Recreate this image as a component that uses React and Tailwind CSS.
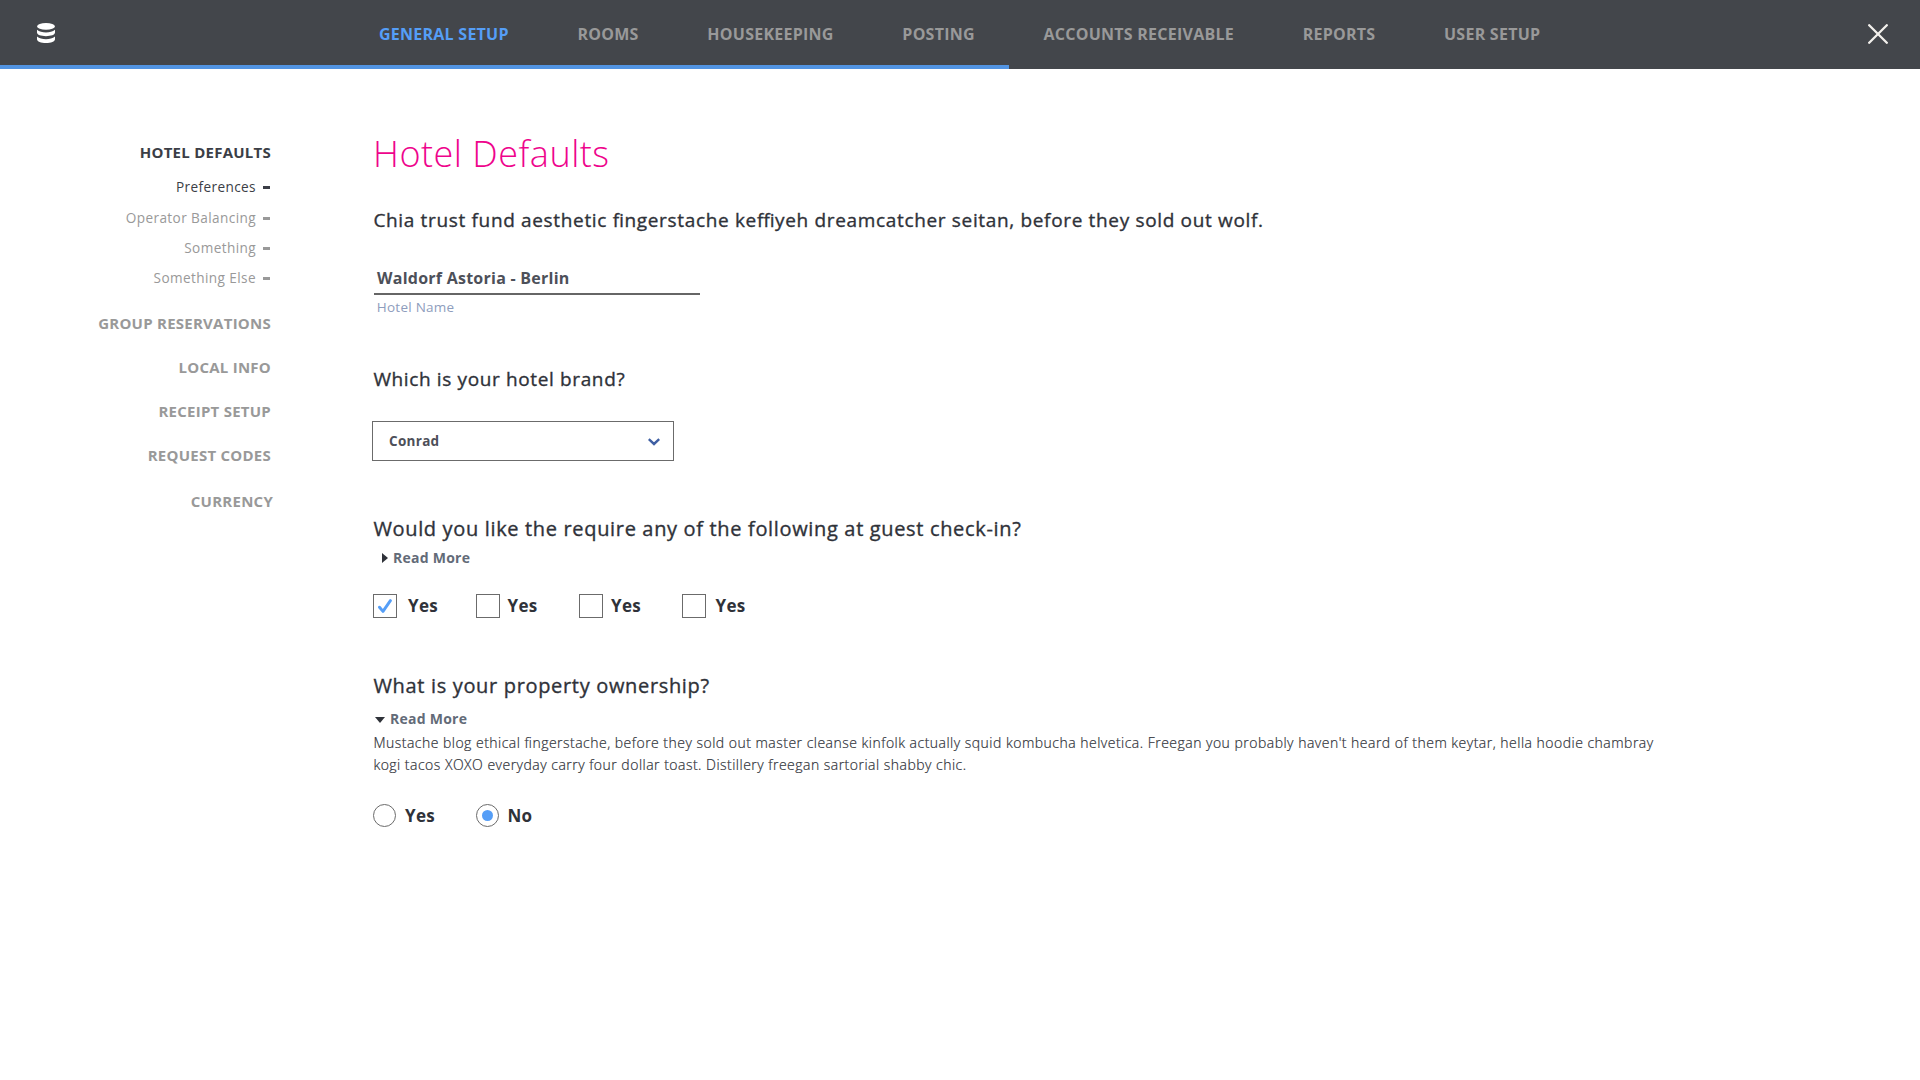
import React from "react";

const NAV = ["GENERAL SETUP", "ROOMS", "HOUSEKEEPING", "POSTING", "ACCOUNTS RECEIVABLE", "REPORTS", "USER SETUP"];

function DatabaseIcon() {
  return (
    <svg width="18" height="20" viewBox="0 0 18 20" fill="#ffffff" className="shrink-0">
      <ellipse cx="9" cy="3.4" rx="8.9" ry="3.4" />
      <path d="M0 6.8 C2.2 8.8 5.4 9.5 9 9.5 S15.8 8.8 18 6.8 V9.6 C18 11.9 14 13.2 9 13.2 S0 11.9 0 9.6 Z" />
      <path d="M0 13.5 C2.2 15.5 5.4 16.2 9 16.2 S15.8 15.5 18 13.5 V16.3 C18 18.7 14 20 9 20 S0 18.7 0 16.3 Z" />
    </svg>
  );
}

function CloseIcon() {
  return (
    <svg width="20" height="20" viewBox="0 0 20 20" fill="none" stroke="#f2f0ec" strokeWidth="2.3" strokeLinecap="round">
      <path d="M1.2 1.2 18.8 18.8M18.8 1.2 1.2 18.8" />
    </svg>
  );
}

function Header() {
  return (
    <header className="h-[69px] bg-[#43464b]">
      <div className="flex h-[65px] items-start">
        <div className="w-[379px] pt-[23px] pl-[37px]">
          <DatabaseIcon />
        </div>
        <nav className="flex gap-[68.7px] pt-[22px] text-base leading-6 font-bold tracking-[0.25px] whitespace-nowrap text-[#999999]">
          {NAV.map((n, i) => (
            <a key={n} className={i === 0 ? "text-[#559ef7]" : ""}>{n}</a>
          ))}
        </nav>
        <button className="mt-6 mr-8 ml-auto">
          <CloseIcon />
        </button>
      </div>
      <div className="h-1 w-[1009px] bg-[#5294e2]" />
    </header>
  );
}

function SubItem({ children, active }) {
  return (
    <li className={`flex h-5 items-center justify-end gap-[7px] text-[13.6px] leading-5 tracking-[0.4px] ${active ? "text-[#3b3e46]" : "text-[#999999]"}`}>
      {children}
      <span className={`h-[3px] w-[7px] ${active ? "bg-[#3b3e46]" : "bg-[#999999]"}`} />
    </li>
  );
}

function Sidebar() {
  return (
    <aside className="w-[273px] pt-[73px] text-right text-[15px] leading-5 font-bold tracking-[0.25px] text-[#999999]">
      <div className="pr-[2px] text-[#3b3e46]">HOTEL DEFAULTS</div>
      <ul className="mt-[15px] mr-[3px] font-normal">
        <SubItem active>Preferences</SubItem>
        <li className="h-[11px]" />
        <SubItem>Operator Balancing</SubItem>
        <li className="h-2.5" />
        <SubItem>Something</SubItem>
        <li className="h-2.5" />
        <SubItem>Something Else</SubItem>
      </ul>
      <div className="mt-[25px] flex flex-col gap-6 pr-[2px]">
        <div>GROUP RESERVATIONS</div>
        <div>LOCAL INFO</div>
        <div>RECEIPT SETUP</div>
        <div>REQUEST CODES</div>
      </div>
      <div className="mt-[26px]">CURRENCY</div>
    </aside>
  );
}

function Check({ checked, label, className }) {
  return (
    <label className={`flex h-6 items-center ${className}`}>
      <span className="flex size-6 items-center justify-center border border-[#6b6b6b]">
        {checked && (
          <svg width="14" height="14" viewBox="0 0 14 14" fill="none" stroke="#559ef7" strokeWidth="2.9" strokeLinecap="round" strokeLinejoin="round">
            <path d="M1.5 8.2 5 12.4 12.4 1.6" />
          </svg>
        )}
      </span>
      {label}
    </label>
  );
}

export default function App() {
  return (
    <div className="min-h-[1080px] w-[1920px] bg-white font-['Open_Sans','Noto_Sans',sans-serif] text-[#2f3239] antialiased">
      <Header />
      <div className="flex">
        <Sidebar />
        <main className="ml-[100px] w-[1300px] pt-[61px]">
          <h1 className="text-[36px] leading-[48px] font-light tracking-[0.5px] text-[#ee048c]">Hotel Defaults</h1>
          <p className="mt-[28px] pl-[0.4px] text-[19px] leading-7 tracking-[0.66px] [-webkit-text-stroke:0.35px] [font-feature-settings:'liga']">
            Chia trust fund aesthetic fingerstache keffiyeh dreamcatcher seitan, before they sold out wolf.
          </p>
          <div className="mt-8 ml-px w-[326px] border-b-2 border-[#666666] pb-[3px] pl-[3px] text-base leading-6 font-bold tracking-[0.25px] text-[#4d5059]">
            Waldorf Astoria - Berlin
          </div>
          <div className="mt-[3px] pl-[3.8px] text-[13.5px] leading-[18px] tracking-[0.25px] text-[#8e9dbd]">Hotel Name</div>

          <h2 className="mt-[49px] pl-[0.4px] text-[19px] leading-7 tracking-[0.63px] [-webkit-text-stroke:0.35px]">Which is your hotel brand?</h2>
          <div className="mt-7 -ml-px flex h-10 w-[302px] items-center justify-between border border-[#6b6b6b] pr-[13px] pl-4 text-[13.5px] leading-5 font-bold tracking-[0.3px] text-[#4d5059]">
            Conrad
            <svg width="12" height="8" viewBox="0 0 12 8" fill="none" stroke="#3f5fa3" strokeWidth="2.4" className="mt-[2px]">
              <path d="M0.8 1.2 6 6 11.2 1.2" />
            </svg>
          </div>

          <h2 className="mt-[54px] pl-[0.4px] text-xl leading-7 tracking-[0.66px] [-webkit-text-stroke:0.35px]">
            Would you like the require any of the following at guest check-in?
          </h2>
          <div className="mt-[5px] flex h-5 items-center pl-[9px] text-sm leading-5 font-bold tracking-[0.25px] text-[#636b78]">
            <svg width="6" height="10" viewBox="0 0 6 10" fill="#2f3239" className="mr-[5px]">
              <path d="M0 0 6 5 0 10Z" />
            </svg>
            Read More
          </div>
          <div className="mt-[26px] flex text-[17px] leading-6 font-bold tracking-[0.3px]">
            <Check checked label="Yes" className="w-[102.5px] gap-[11px]" />
            <Check label="Yes" className="w-[103.5px] gap-2" />
            <Check label="Yes" className="w-[103px] gap-2" />
            <Check label="Yes" className="gap-[9.5px]" />
          </div>

          <h2 className="mt-[54px] pl-[0.4px] text-xl leading-7 tracking-[0.67px] [-webkit-text-stroke:0.35px]">What is your property ownership?</h2>
          <div className="mt-[9px] flex h-5 items-center pl-[2px] text-sm leading-5 font-bold tracking-[0.25px] text-[#636b78]">
            <svg width="10" height="6" viewBox="0 0 10 6" fill="#2f3239" className="mt-px mr-[5px]">
              <path d="M0 0H10L5 6Z" />
            </svg>
            Read More
          </div>
          <p className="mt-[3px] pl-[0.4px] text-sm leading-[22px] font-light tracking-[0.484px] [-webkit-text-stroke:0.2px] [font-feature-settings:'liga']">
            Mustache blog ethical fingerstache, before they sold out master cleanse kinfolk actually squid kombucha helvetica. Freegan you probably haven't heard of them keytar, hella hoodie chambray<br />
            kogi tacos XOXO everyday carry four dollar toast. Distillery freegan sartorial shabby chic.
          </p>
          <div className="mt-7 flex text-[17px] leading-[23px] font-bold tracking-[0.3px]">
            <label className="flex w-[103px] items-center gap-[9px]">
              <span className="size-[23px] rounded-full border border-[#6b6b6b]" />
              <span className="-mt-px">Yes</span>
            </label>
            <label className="flex items-center gap-[8.5px]">
              <span className="flex size-[23px] items-center justify-center rounded-full border border-[#6b6b6b]">
                <span className="size-[11px] rounded-full bg-[#559ef7]" />
              </span>
              <span className="-mt-px">No</span>
            </label>
          </div>
        </main>
      </div>
    </div>
  );
}
